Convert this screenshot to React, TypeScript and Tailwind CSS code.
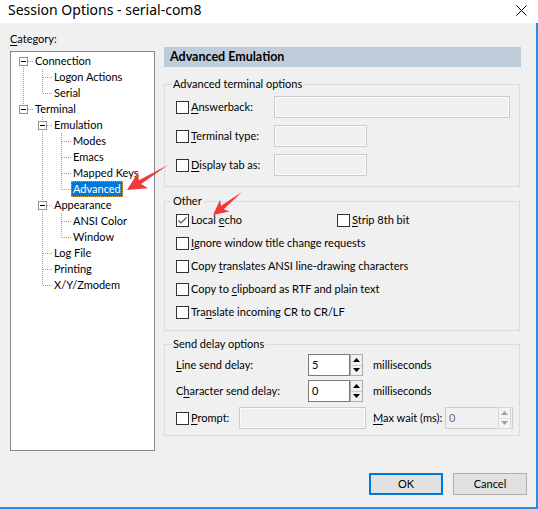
import React from "react";

type Seg = "none" | "pipe" | "tee" | "corner" | "down";

type Node = { label: React.ReactNode; cols: Seg[]; exp?: boolean; selected?: boolean };

const tree: Node[] = [
  { label: "Connection", cols: ["down"], exp: true },
  { label: "Logon Actions", cols: ["pipe", "tee"] },
  { label: "Serial", cols: ["pipe", "corner"] },
  { label: "Terminal", cols: ["corner"], exp: true },
  { label: "Emulation", cols: ["none", "tee"], exp: true },
  { label: "Modes", cols: ["none", "pipe", "tee"] },
  { label: "Emacs", cols: ["none", "pipe", "tee"] },
  { label: "Mapped Keys", cols: ["none", "pipe", "tee"] },
  { label: "Advanced", cols: ["none", "pipe", "corner"], selected: true },
  { label: "Appearance", cols: ["none", "tee"], exp: true },
  { label: "ANSI Color", cols: ["none", "pipe", "tee"] },
  { label: "Window", cols: ["none", "pipe", "corner"] },
  { label: "Log File", cols: ["none", "tee"] },
  { label: "Printing", cols: ["none", "tee"] },
  { label: "X/Y/Zmodem", cols: ["none", "corner"] },
];

function Guide({ seg, last, exp }: { seg: Seg; last: boolean; exp?: boolean }) {
  const dot = { stroke: "#a0a0a0", strokeWidth: 1, strokeDasharray: "1 1" };
  return (
    <svg width="19" height="16" className="shrink-0">
      {(seg === "pipe" || seg === "tee") && <line x1="9.5" y1="0" x2="9.5" y2="16" {...dot} />}
      {seg === "corner" && <line x1="9.5" y1="0" x2="9.5" y2="8.5" {...dot} />}
      {seg === "down" && <line x1="9.5" y1="8" x2="9.5" y2="16" {...dot} />}
      {last && seg !== "pipe" && seg !== "none" && <line x1="10" y1="8.5" x2="19" y2="8.5" {...dot} />}
      {exp && (
        <g>
          <rect x="5.5" y="4.5" width="8" height="8" fill="#fff" stroke="#919191" />
          <line x1="7" y1="8.5" x2="12" y2="8.5" stroke="#000" />
        </g>
      )}
    </svg>
  );
}

function U({ children }: { children: React.ReactNode }) {
  return <span className="underline underline-offset-[2px] decoration-1">{children}</span>;
}

function Check({ checked }: { checked?: boolean }) {
  return (
    <span className="w-[13px] h-[13px] shrink-0 border border-[#333333] bg-white flex items-center justify-center">
      {checked && (
        <svg width="11" height="11" viewBox="0 0 11 11">
          <path d="M1.5 5.5 L4 8 L9.5 2.5" fill="none" stroke="#555555" strokeWidth="1.2" />
        </svg>
      )}
    </span>
  );
}

function Spinner({ disabled }: { disabled?: boolean }) {
  const c = disabled ? "#a0a0a0" : "#000";
  return (
    <div className={["w-[13px] h-[22px] shrink-0 flex flex-col border", disabled ? "border-[#d9d9d9]" : "border-[#adadad]"].join(" ")}>
      <div className={["flex-1 flex items-center justify-center border-b", disabled ? "bg-[#f4f4f4] border-[#e0e0e0]" : "bg-[#f0f0f0] border-[#c8c8c8]"].join(" ")}>
        <svg width="7" height="4"><path d="M3.5 0 L7 4 L0 4 Z" fill={c} /></svg>
      </div>
      <div className={["flex-1 flex items-center justify-center", disabled ? "bg-[#f4f4f4]" : "bg-[#f0f0f0]"].join(" ")}>
        <svg width="7" height="4"><path d="M0 0 L7 0 L3.5 4 Z" fill={c} /></svg>
      </div>
    </div>
  );
}

function Disabled({ w }: { w: string }) {
  return <div className={["h-[22px] border border-[#cccccc] bg-[#f0f0f0] shadow-[inset_0_0_0_1px_#fbfbfb]", w].join(" ")} />;
}

function Arrow({ tip, tail, head }: { tip: [number, number]; tail: [number, number]; head: number }) {
  const dx = tail[0] - tip[0];
  const dy = tail[1] - tip[1];
  const L = Math.sqrt(dx * dx + dy * dy);
  const a = (Math.atan2(dy, dx) * 180) / Math.PI;
  const hw = head * 0.5;
  const pts = `0,0 ${head},${-hw} ${head * 0.8},${-2.2} ${L},0 ${head * 0.8},2.2 ${head},${hw}`;
  return <polygon points={pts} fill="#f03a3a" transform={`translate(${tip[0]} ${tip[1]}) rotate(${a})`} />;
}

export default function App() {
  return (
    <div className="relative w-[538px] h-[509px] bg-[#f0f0f0] text-[11px] text-black font-['Lato','Noto_Sans',sans-serif] flex flex-col overflow-hidden">
      {/* title bar */}
      <div className="h-[23px] bg-white flex items-center justify-between pl-[8px] pr-[11px] shrink-0">
        <span className="text-[14px] leading-[18px] -mt-[3px] font-['Noto_Sans',sans-serif]">Session Options - serial-com8</span>
        <svg width="11" height="11" className="-mt-[2px]">
          <path d="M0.5 0.5 L10.5 10.5 M10.5 0.5 L0.5 10.5" stroke="#000" strokeWidth="1" />
        </svg>
      </div>

      <div className="flex-1 flex flex-col border-r-2 border-b-2 border-[#2b8ae0]">
        <div className="flex pl-[10px] pt-[8px]">
          {/* category tree */}
          <div className="w-[145px] flex flex-col">
            <div className="leading-[16px]"><U>C</U>ategory:</div>
            <div className="mt-[4px] h-[400px] border border-[#828790] bg-white pl-[3px] pt-[1px]">
              {tree.map((n, i) => (
                <div key={i} className="flex items-center h-[16px]">
                  {n.cols.map((s, j) => (
                    <Guide key={j} seg={s} last={j === n.cols.length - 1} exp={j === n.cols.length - 1 && n.exp} />
                  ))}
                  <span
                    className={[
                      "h-[16px] leading-[14px] px-[1px] border whitespace-nowrap",
                      n.selected ? "bg-[#0078d7] text-white border-dotted border-[#d9a040]" : "border-transparent",
                    ].join(" ")}
                  >
                    {n.label}
                  </span>
                </div>
              ))}
            </div>
          </div>

          {/* right panel */}
          <div className="ml-[9px] w-[357px] pt-[16px] flex flex-col">
            <div className="h-[20px] bg-[#bfcddb] pl-[6px] font-bold text-[12.5px] leading-[20px]">Advanced Emulation</div>

            <fieldset className="mt-[9px] w-[356px] border border-[#dcdcdc] pl-[11px] pb-[10px]">
              <legend className="ml-[-4px] px-[1px] leading-[16px]">Advanced terminal options</legend>
              <div className="flex flex-col gap-[7px] mt-[4px]">
                <div className="flex items-center h-[22px]">
                  <div className="w-[98px] flex items-center gap-[2px]"><Check /><span><U>A</U>nswerback:</span></div>
                  <Disabled w="w-[236px]" />
                </div>
                <div className="flex items-center h-[22px]">
                  <div className="w-[98px] flex items-center gap-[2px]"><Check /><span><U>T</U>erminal type:</span></div>
                  <Disabled w="w-[93px]" />
                </div>
                <div className="flex items-center h-[22px]">
                  <div className="w-[98px] flex items-center gap-[2px]"><Check /><span><U>D</U>isplay tab as:</span></div>
                  <Disabled w="w-[93px]" />
                </div>
              </div>
            </fieldset>

            <fieldset className="mt-[6px] w-[356px] border border-[#dcdcdc] pl-[11px] pb-[6px]">
              <legend className="ml-[-4px] px-[1px] leading-[16px]">Other</legend>
              <div className="flex flex-col">
                <div className="flex items-center h-[23px]">
                  <div className="w-[161px] flex items-center gap-[2px]"><Check checked /><span>Local <U>e</U>cho</span></div>
                  <div className="flex items-center gap-[2px]"><Check /><span><U>S</U>trip 8th bit</span></div>
                </div>
                <div className="flex items-center h-[23px] gap-[2px]"><Check /><span><U>I</U>gnore window title change requests</span></div>
                <div className="flex items-center h-[23px] gap-[2px]"><Check /><span>Copy <U>t</U>ranslates ANSI line-drawing characters</span></div>
                <div className="flex items-center h-[23px] gap-[2px]"><Check /><span>Copy to <U>c</U>lipboard as RTF and plain text</span></div>
                <div className="flex items-center h-[23px] gap-[2px]"><Check /><span>Tra<U>n</U>slate incoming CR to CR/LF</span></div>
              </div>
            </fieldset>

            <fieldset className="mt-[5px] w-[356px] border border-[#dcdcdc] pl-[11px] pb-[6px]">
              <legend className="ml-[-4px] px-[1px] leading-[16px]">Send delay options</legend>
              <div className="flex flex-col mt-[2px]">
                <div className="flex items-center h-[22px]">
                  <span className="w-[132px]"><U>L</U>ine send delay:</span>
                  <div className="w-[42px] h-[22px] border border-[#7a7a7a] bg-white pl-[3px] leading-[20px]">5</div>
                  <Spinner />
                  <span className="ml-[10px]">milliseconds</span>
                </div>
                <div className="flex items-center h-[22px] mt-[4px]">
                  <span className="w-[132px]">C<U>h</U>aracter send delay:</span>
                  <div className="w-[42px] h-[22px] border border-[#7a7a7a] bg-white pl-[3px] leading-[20px]">0</div>
                  <Spinner />
                  <span className="ml-[10px]">milliseconds</span>
                </div>
                <div className="flex items-center h-[22px] mt-[5px]">
                  <div className="w-[63px] flex items-center gap-[2px]"><Check /><span><U>P</U>rompt:</span></div>
                  <Disabled w="w-[127px]" />
                  <span className="ml-[7px] w-[72px] whitespace-nowrap"><U>M</U>ax wait (ms):</span>
                  <div className="w-[68px] h-[22px] border border-[#cccccc] bg-[#f0f0f0] flex items-center justify-between pl-[3px] pr-[2px]">
                    <span className="text-[#6d6d6d]">0</span>
                    <div className="-mr-[1px]"><Spinner disabled /></div>
                  </div>
                </div>
              </div>
            </fieldset>
          </div>
        </div>

        {/* buttons */}
        <div className="flex justify-end gap-[10px] pr-[9px] mt-[22px]">
          <button className="w-[74px] h-[22px] border-2 border-[#0078d7] bg-[#e1e1e1] leading-[18px]">OK</button>
          <button className="w-[74px] h-[22px] border border-[#adadad] bg-[#e1e1e1] leading-[20px]">Cancel</button>
        </div>
      </div>

      {/* annotation arrows */}
      <svg className="absolute inset-0 pointer-events-none" width="538" height="509">
        <Arrow tip={[127, 190]} tail={[168, 165]} head={19} />
        <Arrow tip={[213, 215]} tail={[242, 192]} head={15} />
      </svg>
    </div>
  );
}
